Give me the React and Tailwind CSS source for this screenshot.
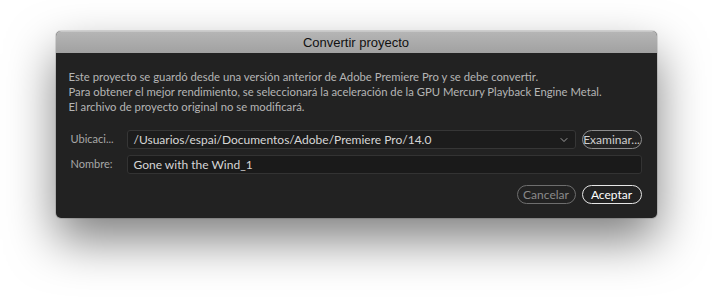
import { ChevronDown } from 'lucide-react'

export default function App() {
  return (
    <div className="w-[712px] h-[298px] bg-white flex justify-center pt-[31px]"
      style={{ fontFamily: 'Lato, "Open Sans", sans-serif' }}>
      <div className="w-[601px] h-[187px] rounded-[5px] overflow-hidden flex flex-col bg-[#222222] shadow-[0_22px_48px_rgba(0,0,0,0.5),0_0_0_1px_rgba(0,0,0,0.12)]">

        {/* Title bar */}
        <div className="h-[22px] flex items-center justify-center bg-gradient-to-b from-[#b5b5b5] to-[#a1a1a1] border-t border-[#c8c8c8]">
          <span className="text-[13px] text-[#111] leading-none"
            style={{ fontFamily: '"Liberation Sans", Arial, sans-serif' }}>
            Convertir proyecto
          </span>
        </div>

        {/* Body */}
        <div className="flex-1 flex flex-col pl-[13px] pr-[15px] pt-[16px]">
          <p className="text-[11.3px] leading-[15px] text-[#b5b5b5]">
            Este proyecto se guardó desde una versión anterior de Adobe Premiere Pro y se debe convertir.<br />
            Para obtener el mejor rendimiento, se seleccionará la aceleración de la GPU Mercury Playback Engine Metal.<br />
            El archivo de proyecto original no se modificará.
          </p>

          <div className="mt-[16px] flex items-center h-[19px]">
            <span className="w-[58px] pl-[2px] text-[11px] text-[#a8a8a8]">Ubicaci...</span>
            <div className="flex-1 h-[19px] flex items-center justify-between pl-[6px] pr-[5px] rounded-[3px] bg-[#1c1c1c] border border-[#363636]">
              <span className="text-[12px] text-[#d6d6d6]">/Usuarios/espai/Documentos/Adobe/Premiere Pro/14.0</span>
              <ChevronDown size={12} strokeWidth={1.6} className="text-[#bdbdbd]" />
            </div>
            <button className="ml-[6px] w-[60px] h-[19px] rounded-full border-[1.5px] border-[#8c8c8c] text-[12px] text-[#cfcfcf] flex items-center justify-center">
              Examinar...
            </button>
          </div>

          <div className="mt-[6px] flex items-center h-[19px]">
            <span className="w-[58px] pl-[2px] text-[11px] text-[#a8a8a8]">Nombre:</span>
            <div className="flex-1 h-[19px] flex items-center pl-[6px] rounded-[3px] bg-[#1a1a1a] border border-[#333333]">
              <span className="text-[12px] text-[#d6d6d6]">Gone with the Wind_1</span>
            </div>
          </div>

          <div className="mt-[11px] flex justify-end gap-[6px]">
            <button className="w-[59px] h-[19px] rounded-full border-[1.5px] border-[#6e6e6e] text-[12px] text-[#8a8a8a] flex items-center justify-center">
              Cancelar
            </button>
            <button className="w-[60px] h-[19px] rounded-full border-[1.5px] border-[#e6e6e6] text-[12px] text-white flex items-center justify-center">
              Aceptar
            </button>
          </div>
        </div>
      </div>
    </div>
  )
}
